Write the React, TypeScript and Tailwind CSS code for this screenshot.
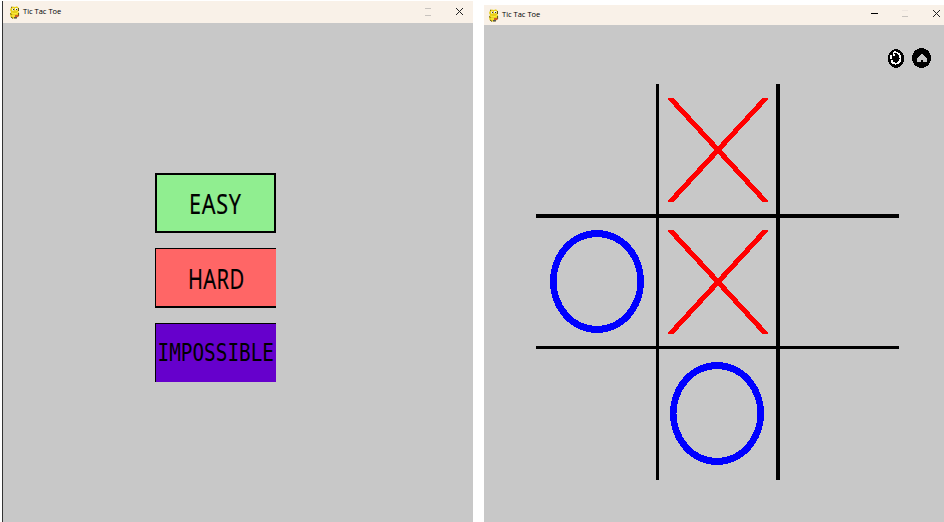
import React from "react";

function Snake() {
  return (
    <svg className="h-[13px] w-[11px] shrink-0" viewBox="0 0 11 13">
      <path d="M2 1.5 3.5.5 6 1l2-.7 1.5 1.5-.5 3 1 2-.6 3.7L7 12.5H4L1.5 11 1 8l1-2-1-2z" fill="#e8cf18" />
      <path d="M2 1.5 3 1M1 7.5l1.5 1M2 11l2 1.5M9.5 2v3M9.6 7v3" stroke="#5f5510" strokeWidth="1" />
      <path d="M3 2.5h2v2H3zM6 2h2.5v2.3H6z" fill="#f5f5ed" />
      <path d="M4 3h1v1H4zM7 3h1v1H7z" fill="#333" />
      <path d="M3 7c2 1.3 4 1 6-.5M3 10h3" stroke="#fff04a" fill="none" />
      <path d="M6 9.2h3.5v1.6H6z" fill="#c9432c" />
      <path d="M5 11h3v1.5H5z" fill="#555" />
    </svg>
  );
}

function TitleBar({ className, children }: { className: string; children: React.ReactNode }) {
  return (
    <header className={`flex shrink-0 bg-[#f9f1e8] font-['Open_Sans','Noto_Sans',sans-serif] text-black ${className}`}>
      <Snake />
      {children}
    </header>
  );
}

function Cross() {
  return (
    <svg className="h-[104px] w-[100px]" viewBox="0 0 100 104" shapeRendering="crispEdges">
      <path d="M0 0H5.5L100 102.5V104H94.5L0 1.5Z" fill="#f00" />
      <path d="M94.5 0H100V1.5L5.5 104H0V102.5Z" fill="#f00" />
    </svg>
  );
}

function Nought() {
  return (
    <svg className="h-[103px] w-[94px]" viewBox="0 0 94 103" shapeRendering="crispEdges">
      <path
        fillRule="evenodd"
        fill="#00f"
        d="M47 0A47 51.5 0 0 1 47 103A47 51.5 0 0 1 47 0ZM47 7A40.5 44.5 0 0 0 47 96A40.5 44.5 0 0 0 47 7Z"
      />
    </svg>
  );
}

function Menu() {
  return (
    <section className="mt-px flex w-[471px] flex-col border-l border-[#333] bg-[#c8c8c8]">
      <TitleBar className="h-[22px] items-center pl-[6px] pr-[10px]">
        <span className="ml-[3px] whitespace-nowrap text-[7.5px] leading-none">Tic Tac Toe</span>
        <svg className="mb-px ml-auto h-2 w-[6px]" viewBox="0 0 6 8" shapeRendering="crispEdges">
          <path d="M0 .5H6M0 7.5H6" stroke="#c8c3be" />
        </svg>
        <svg className="mb-[2px] ml-[25px] h-[7px] w-[7px]" viewBox="0 0 7 7">
          <path d="m0 0 7 7m0-7-7 7" stroke="#222" strokeWidth="1" />
        </svg>
      </TitleBar>
      <div className="flex flex-col gap-[15px] pl-[152px] pt-[150px] font-['Comic_Sans_MS','Noto_Sans',sans-serif] text-black">
        <button className="flex h-[60px] w-[121px] items-center justify-center border-2 border-black bg-[#90ee90]">
          <span className="scale-x-[0.77] text-[28px] leading-none tracking-[1px] [-webkit-text-stroke:0.2px_black]">EASY</span>
        </button>
        <button className="flex h-[60px] w-[121px] items-center justify-center border-b-2 border-l border-t border-black bg-[#ff6666]">
          <span className="scale-x-[0.72] text-[28px] leading-none tracking-[0.5px] [-webkit-text-stroke:0.2px_black]">HARD</span>
        </button>
        <button className="flex h-[59px] w-[121px] items-center justify-center border-l border-t border-black bg-[#6600cc]">
          <span className="mt-px scale-x-[0.79] font-['DejaVu_Sans_Mono',monospace] text-[24.5px] leading-none">IMPOSSIBLE</span>
        </button>
      </div>
    </section>
  );
}

function Game() {
  return (
    <section className="ml-[11px] mt-[5px] flex w-[460px] flex-col bg-[#c8c8c8]">
      <TitleBar className="h-[20px] items-center pl-[4px] pr-[4px]">
        <span className="mb-px ml-[3px] whitespace-nowrap text-[7.5px] leading-none">Tic Tac Toe</span>
        <svg className="mb-[3px] ml-auto h-[7px] w-[7px]" viewBox="0 0 7 7" shapeRendering="crispEdges">
          <path d="M0 3.5H7" stroke="#000" />
        </svg>
        <svg className="mb-[3px] ml-[24px] h-[7px] w-[6px]" viewBox="0 0 6 7" shapeRendering="crispEdges">
          <path d="M0 .5H6" stroke="#eee6df" />
          <path d="M0 6.5H6" stroke="#c8c3be" />
        </svg>
        <svg className="mb-[3px] ml-[25px] h-[7px] w-[7px]" viewBox="0 0 7 7">
          <path d="m0 0 7 7m0-7-7 7" stroke="#222" strokeWidth="1" />
        </svg>
      </TitleBar>
      <nav className="flex h-[59px] justify-end gap-[8px] pr-[13px] pt-[23px]">
        <svg className="mt-px h-[19px] w-[16px]" viewBox="0 0 16 19" shapeRendering="crispEdges">
          <ellipse cx="8" cy="9.5" rx="8" ry="9.5" fill="#000" />
          <path d="M5 3.8C8 2.6 11 3.8 12.2 7c1.2 4-1 7.7-4.4 7.7C5.8 14.7 4.3 13.7 3.5 12M3 6.3v3.2" fill="none" stroke="#fff" strokeWidth="1.8" />
          <path d="M4.5 5H7v1.5H4.5zM3 11h2v2H3z" fill="#fff" />
        </svg>
        <svg className="h-[20px] w-[19px]" viewBox="0 0 19 20" shapeRendering="crispEdges">
          <ellipse cx="9.5" cy="10" rx="9.5" ry="10" fill="#000" />
          <path d="m9.7 5.3 5.3 5.5v3.2h-3.7v-2H8.7v2H5v-3.2z" fill="#c8c8c8" />
        </svg>
      </nav>
      <div className="ml-[52px] grid h-[396px] w-[363px] grid-cols-[120px_3px_117px_4px_119px] grid-rows-[130px_4px_128px_3px_131px]">
        <i className="col-start-2 row-span-5 row-start-1 bg-black" />
        <i className="col-start-4 row-span-5 row-start-1 bg-black" />
        <i className="col-span-5 col-start-1 row-start-2 bg-black" />
        <i className="col-span-5 col-start-1 row-start-4 bg-black" />
        <div className="col-start-3 row-start-1 pl-[9px] pt-[14px]"><Cross /></div>
        <div className="col-start-1 row-start-3 pl-[14px] pt-[12px]"><Nought /></div>
        <div className="col-start-3 row-start-3 pl-[9px] pt-[12px]"><Cross /></div>
        <div className="col-start-3 row-start-5 pl-[11px] pt-[13px]"><Nought /></div>
      </div>
    </section>
  );
}

export default function App() {
  return (
    <main className="flex h-[522px] w-[944px] overflow-hidden bg-white pl-[2px]">
      <Menu />
      <Game />
    </main>
  );
}
